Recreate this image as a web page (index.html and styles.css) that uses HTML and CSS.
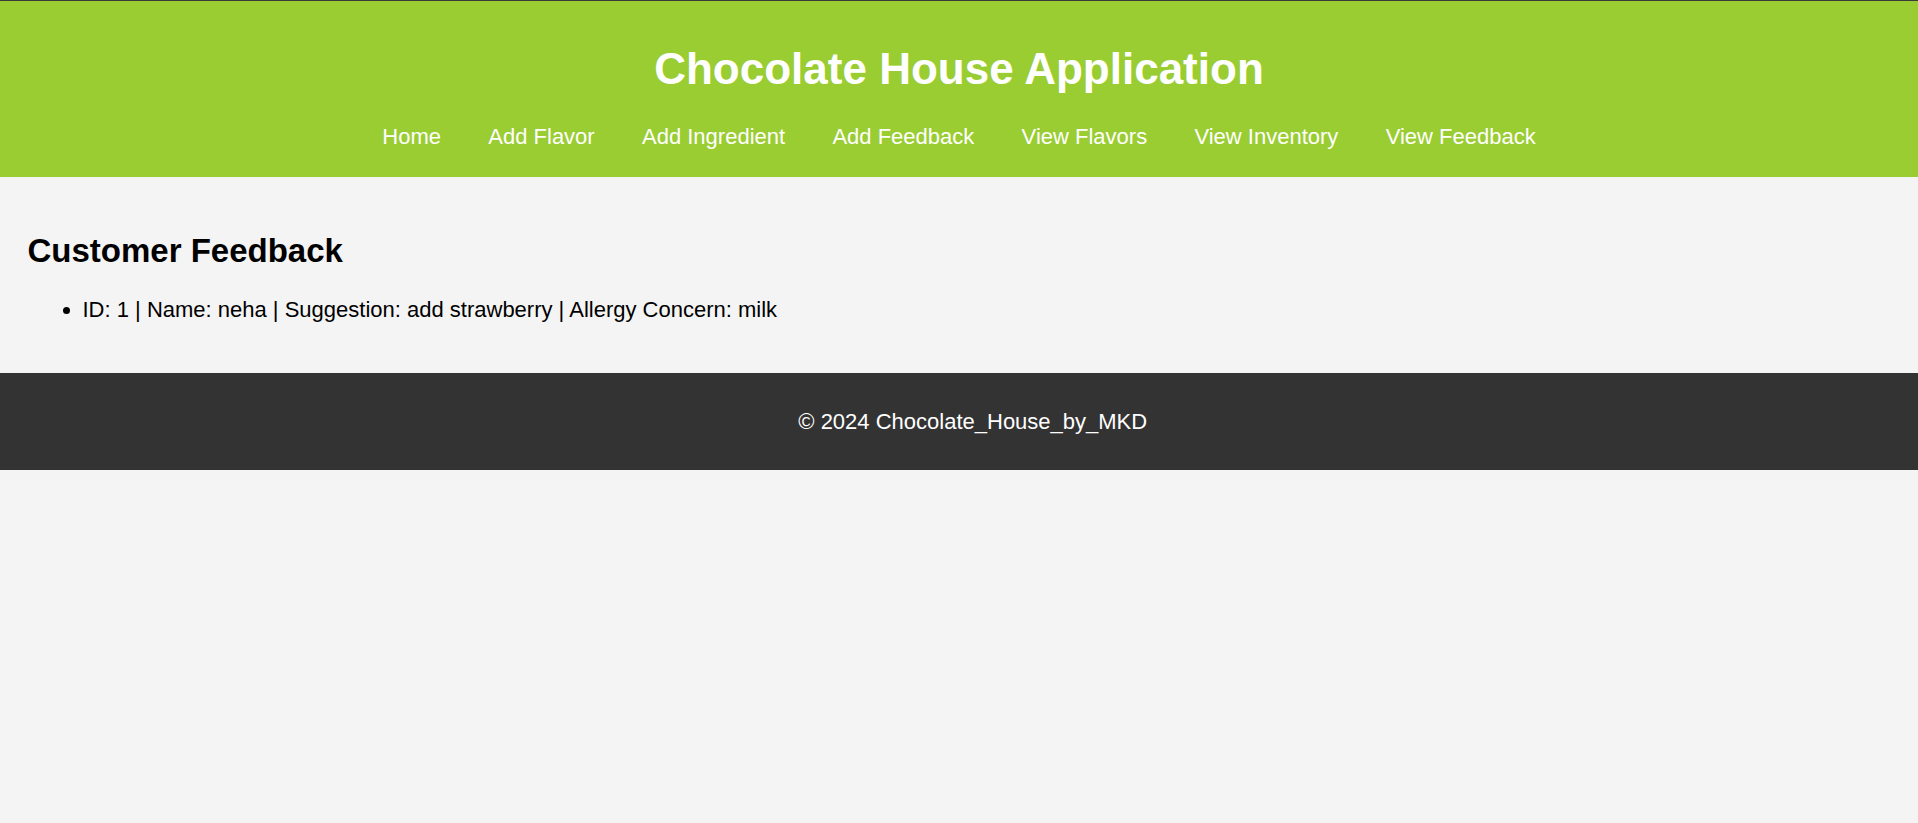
FILE: index.html
```html
<!DOCTYPE html>
<html lang="en">
<head>
<meta charset="utf-8">
<title>Chocolate House Application</title>
<link rel="stylesheet" href="styles.css">
</head>
<body>
<header class="site-header">
  <h1 class="site-title">Chocolate House Application</h1>
  <nav class="site-nav">
    <a href="#">Home</a>
    <a href="#">Add Flavor</a>
    <a href="#">Add Ingredient</a>
    <a href="#">Add Feedback</a>
    <a href="#">View Flavors</a>
    <a href="#">View Inventory</a>
    <a href="#">View Feedback</a>
  </nav>
</header>
<main class="content">
  <h2 class="section-title">Customer Feedback</h2>
  <ul class="feedback-list">
    <li>ID: 1 | Name: neha | Suggestion: add strawberry | Allergy Concern: milk</li>
  </ul>
</main>
<footer class="site-footer">
  <p>&copy; 2024 Chocolate_House_by_MKD</p>
</footer>
</body>
</html>
```
FILE: styles.css
```css
html, body {
  margin: 0;
  padding: 0;
}
body {
  font-family: "Liberation Sans", Arial, sans-serif;
  font-size: 22px;
  background: #f4f4f4;
  color: #000;
  border-top: 1px solid #3a3a3a;
  overflow-x: hidden;
}
.site-header {
  background: #9acd32;
  color: #fff;
  text-align: center;
  padding: 13.75px 0 27.3px;
}
.site-title {
  font-size: 44px;
  margin: 29.5px 0;
  line-height: normal;
}
.site-nav {
  line-height: normal;
}
.site-nav a {
  color: #fff;
  text-decoration: none;
  margin: 0 20.6px;
}
.content {
  padding: 27.5px;
}
.section-title {
  font-size: 33px;
  margin: 27.4px 0;
}
.feedback-list {
  margin: 22px 0;
  padding-left: 55px;
}
.site-footer {
  background: #333;
  color: #fff;
  text-align: center;
  padding: 13.75px 0 13.75px 27.5px;
}
.site-footer p {
  margin: 22px 0;
}
```
